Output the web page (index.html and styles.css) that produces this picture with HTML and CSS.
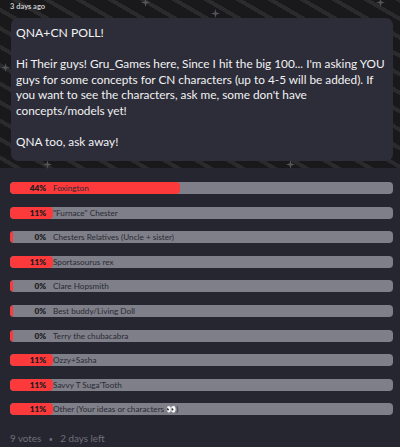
FILE: index.html
```html
<!DOCTYPE html>
<html>
<head>
<meta charset="utf-8">
<link rel="stylesheet" href="styles.css">
</head>
<body>
<div class="header">
  <svg class="star star-a" viewBox="0 0 10 10"><path d="M5 0 L6 4 L10 5 L6 6 L5 10 L4 6 L0 5 L4 4 Z" fill="#55565a"/></svg>
  <svg class="star star-b" viewBox="0 0 10 10"><path d="M5 0 L6 4 L10 5 L6 6 L5 10 L4 6 L0 5 L4 4 Z" fill="#55565a"/></svg>
  <svg class="star star-c" viewBox="0 0 10 10"><path d="M5 0 L6 4 L10 5 L6 6 L5 10 L4 6 L0 5 L4 4 Z" fill="#55565a"/></svg>
  <svg class="star star-d" viewBox="0 0 10 10"><path d="M5 0 L6 4 L10 5 L6 6 L5 10 L4 6 L0 5 L4 4 Z" fill="#55565a"/></svg>
  <svg class="star star-e" viewBox="0 0 10 10"><path d="M5 0 L6 4 L10 5 L6 6 L5 10 L4 6 L0 5 L4 4 Z" fill="#55565a"/></svg>
  <svg class="star star-f" viewBox="0 0 10 10"><path d="M5 0 L6 4 L10 5 L6 6 L5 10 L4 6 L0 5 L4 4 Z" fill="#55565a"/></svg>
  <div class="time">3 days ago</div>
  <div class="bubble">
    <p>QNA+CN POLL!</p>
    <p class="body">Hi Their guys! Gru_Games here, Since I hit the big 100... I'm asking YOU<br>guys for some concepts for CN characters (up to 4-5 will be added). If<br>you want to see the characters, ask me, some don't have<br>concepts/models yet!</p>
    <p>QNA too, ask away!</p>
  </div>
</div>
<div class="poll">
  <div class="bar"><div class="fill" style="width:44.4%"></div><span class="pct">44%</span><span class="label">Foxington</span></div>
  <div class="bar"><div class="fill" style="width:11.1%"></div><span class="pct">11%</span><span class="label">"Furnace" Chester</span></div>
  <div class="bar"><div class="fill" style="width:0%"></div><span class="pct">0%</span><span class="label">Chesters Relatives (Uncle + sister)</span></div>
  <div class="bar"><div class="fill" style="width:11.1%"></div><span class="pct">11%</span><span class="label">Sportasourus rex</span></div>
  <div class="bar"><div class="fill" style="width:0%"></div><span class="pct">0%</span><span class="label">Clare Hopsmith</span></div>
  <div class="bar"><div class="fill" style="width:0%"></div><span class="pct">0%</span><span class="label">Best buddy/Living Doll</span></div>
  <div class="bar"><div class="fill" style="width:0%"></div><span class="pct">0%</span><span class="label">Terry the chubacabra</span></div>
  <div class="bar"><div class="fill" style="width:11.1%"></div><span class="pct">11%</span><span class="label">Ozzy+Sasha</span></div>
  <div class="bar"><div class="fill" style="width:11.1%"></div><span class="pct">11%</span><span class="label">Savvy T Suga'Tooth</span></div>
  <div class="bar"><div class="fill" style="width:11.1%"></div><span class="pct">11%</span><span class="label">Other (Your ideas or characters 👀)</span></div>
  <div class="footer">9 votes <span class="dot">•</span> 2 days left</div>
</div>
</body>
</html>
```
FILE: styles.css
```css
html, body {
  margin: 0;
  padding: 0;
}
body {
  background: #262630;
  font-family: "Lato", "Noto Sans", sans-serif;
  width: 400px;
  height: 447px;
  overflow: hidden;
}
.header {
  position: relative;
  height: 168px;
  background:
    repeating-linear-gradient(30deg, #19191b 0 7px, #2b2b2e 7px 11px, #19191b 11px 16px);
  padding: 0 7px 0 11px;
  box-sizing: border-box;
}
.star {
  position: absolute;
  width: 9px;
  height: 9px;
}
.star-a { left: 141px; top: -2px; }
.star-b { left: 376px; top: -2px; }
.star-c { left: 1px; top: 63px; }
.star-d { left: 211px; top: 9px; }
.star-e { left: 43px; top: 160px; }
.star-f { left: 286px; top: 160px; }
.time {
  position: relative;
  height: 18px;
  line-height: 14px;
  font-size: 7.5px;
  font-weight: 700;
  color: #c9c9cc;
  margin-left: -1px;
}
.bubble {
  position: relative;
  background: #2c2d38;
  border-radius: 7px;
  height: 143px;
  padding: 7px 4px 0 5px;
  box-sizing: border-box;
  color: #f2f2f4;
  font-size: 11.8px;
  line-height: 15.6px;
}
.bubble p {
  margin: 0 0 15.6px 0;
}
.bubble .body {
  white-space: nowrap;
}
.bubble p:first-child {
  font-size: 12.2px;
}
.poll {
  display: flex;
  flex-direction: column;
  gap: 12.6px;
  padding: 14px 7px 0 10px;
}
.bar {
  position: relative;
  height: 12px;
  background: #7e7f89;
  border-radius: 4px;
  display: flex;
  align-items: center;
  overflow: hidden;
}
.fill {
  position: absolute;
  left: 0;
  top: 0;
  bottom: 0;
  min-width: 3px;
  background: #fd3a3b;
  border-radius: 4px;
}
.pct {
  position: relative;
  width: 36px;
  text-align: right;
  font-size: 8.2px;
  font-weight: 800;
  color: #1d1d22;
}
.label {
  position: relative;
  margin-left: 7px;
  font-size: 8.2px;
  color: #2a2a32;
}
.footer {
  margin-top: 4px;
  font-size: 9.8px;
  color: #6e707a;
}
.dot {
  margin: 0 5px;
  font-size: 7px;
}
```
